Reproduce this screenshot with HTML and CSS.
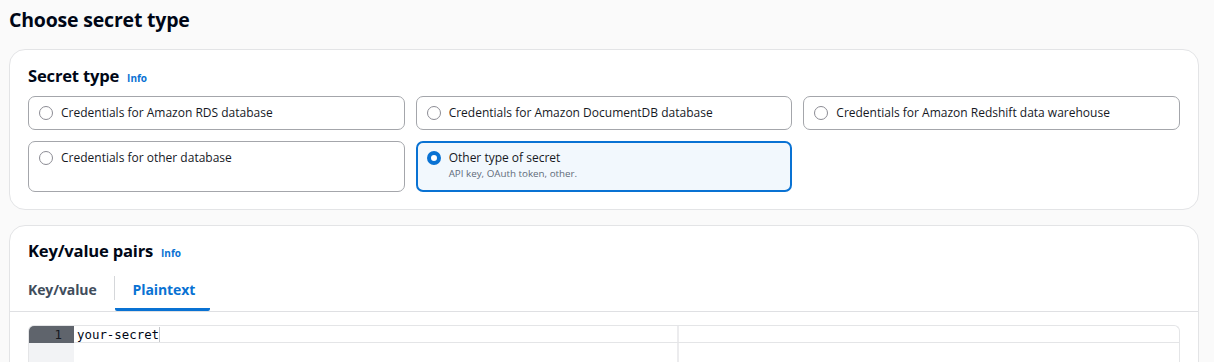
FILE: index.html
```html
<!DOCTYPE html>
<html>
<head>
    <title>Choose secret type</title>
    <link rel="stylesheet" href="styles.css">
</head>
<body>
    <h1 class="page-title">Choose secret type</h1>

    <div class="card">
        <div class="card-header">
            <h2>Secret type</h2>
            <a class="info-link" href="#">Info</a>
        </div>
        <div class="tiles">
            <label class="tile">
                <span class="radio"></span>
                <span class="tile-text">Credentials for Amazon RDS database</span>
            </label>
            <label class="tile">
                <span class="radio"></span>
                <span class="tile-text">Credentials for Amazon DocumentDB database</span>
            </label>
            <label class="tile">
                <span class="radio"></span>
                <span class="tile-text">Credentials for Amazon Redshift data warehouse</span>
            </label>
            <label class="tile tile-tall">
                <span class="radio"></span>
                <span class="tile-text">Credentials for other database</span>
            </label>
            <label class="tile tile-tall selected">
                <span class="radio"></span>
                <span class="tile-text">
                    Other type of secret
                    <span class="tile-desc">API key, OAuth token, other.</span>
                </span>
            </label>
        </div>
    </div>

    <div class="card card-open">
        <div class="card-header">
            <h2>Key/value pairs</h2>
            <a class="info-link" href="#">Info</a>
        </div>
        <div class="tabs">
            <button class="tab">Key/value</button>
            <button class="tab active">Plaintext</button>
        </div>
        <div class="editor-wrap">
            <div class="editor">
                <div class="gutter">
                    <div class="line-no active">1</div>
                </div>
                <div class="code">
                    <div class="code-line active"><span class="code-text">your-secret</span><span class="cursor"></span></div>
                    <div class="code-line"></div>
                </div>
            </div>
        </div>
    </div>
</body>
</html>
```

FILE: styles.css
```css
body {
    font-family: "Open Sans", Arial, sans-serif;
    background-color: #fafafa;
    color: #000716;
    margin: 0;
    padding: 0 15px 0 9px;
}

.page-title {
    font-size: 19.5px;
    font-weight: 700;
    line-height: 24px;
    margin: 8px 0 17px;
    letter-spacing: -0.2px;
}

.card {
    background-color: #fff;
    border: 1px solid #e3e4e6;
    border-radius: 16px;
    padding: 14px 18px 17px;
    margin-bottom: 15px;
}

.card-header {
    display: flex;
    align-items: baseline;
    gap: 8px;
    margin-bottom: 8px;
}

.card-header h2 {
    font-size: 16.6px;
    font-weight: 700;
    line-height: 24px;
    margin: 0;
    letter-spacing: -0.2px;
}

.info-link {
    font-size: 10px;
    font-weight: 700;
    color: #0972d3;
    text-decoration: none;
}

.tiles {
    display: grid;
    grid-template-columns: repeat(3, 1fr);
    gap: 11px;
}

.tile {
    display: flex;
    align-items: flex-start;
    gap: 8px;
    height: 34px;
    box-sizing: border-box;
    padding: 8px 10px;
    border: 1px solid #a4a6ab;
    border-radius: 7px;
    background-color: #fff;
    font-size: 12px;
    line-height: 16px;
    color: #16191f;
    cursor: pointer;
}

.tile-tall {
    height: 51px;
}

.radio {
    flex: none;
    width: 14px;
    height: 14px;
    margin-top: 1px;
    box-sizing: border-box;
    border: 1px solid #8c8c94;
    border-radius: 50%;
    background-color: #fff;
}

.tile-text {
    display: flex;
    flex-direction: column;
}

.tile-desc {
    font-size: 9.8px;
    line-height: 15px;
    color: #5f6b7a;
}

.tile.selected {
    border: 2px solid #0972d3;
    padding: 7px 9px;
    background-color: #f2f8fd;
}

.tile.selected .radio {
    border: 4px solid #0972d3;
}

.card-open {
    padding: 13px 0 40px;
    border-radius: 16px 16px 0 0;
}

.card-open .card-header {
    padding: 0 18px;
    margin-bottom: 12px;
}

.tabs {
    display: flex;
    border-bottom: 1px solid #dfe0e3;
    padding-left: 18px;
    margin-bottom: 13px;
}

.tab {
    font-family: inherit;
    font-size: 14px;
    font-weight: 700;
    color: #414d5c;
    background: none;
    border: none;
    padding: 5px 15px 9px 18px;
    border-bottom: 3px solid transparent;
    position: relative;
    letter-spacing: -0.1px;
}

.tab:first-child {
    padding-left: 0;
    padding-right: 18px;
}

.tab:first-child::after {
    content: "";
    position: absolute;
    right: 0;
    top: 1px;
    height: 24px;
    border-right: 1px solid #d5d7da;
}

.tab.active {
    color: #0972d3;
    border-bottom-color: #0972d3;
    border-radius: 2px;
}

.editor-wrap {
    padding: 0 18px;
}

.editor {
    display: flex;
    border: 1px solid #e4e5e7;
    border-bottom: none;
    border-radius: 6px 6px 0 0;
    overflow: hidden;
    font-family: "DejaVu Sans Mono", "Liberation Mono", monospace;
    font-size: 12.4px;
    line-height: 17px;
}

.gutter {
    width: 45px;
    background-color: #f2f3f5;
    min-height: 40px;
}

.line-no {
    text-align: right;
    padding-right: 12px;
    height: 17px;
}

.line-no.active {
    background-color: #5f646c;
    color: #16191f;
}

.code {
    flex: 1;
    background-image: linear-gradient(to right, transparent 603px, #ececee 603px, #ececee 605px, transparent 605px);
}

.code-line {
    height: 17px;
    padding-left: 3px;
    display: flex;
    align-items: center;
}

.code-line.active {
    border-bottom: 1px solid #e4e5e7;
    height: 16px;
}

.cursor {
    width: 1px;
    height: 15px;
    background-color: #c5c7ca;
}
```
